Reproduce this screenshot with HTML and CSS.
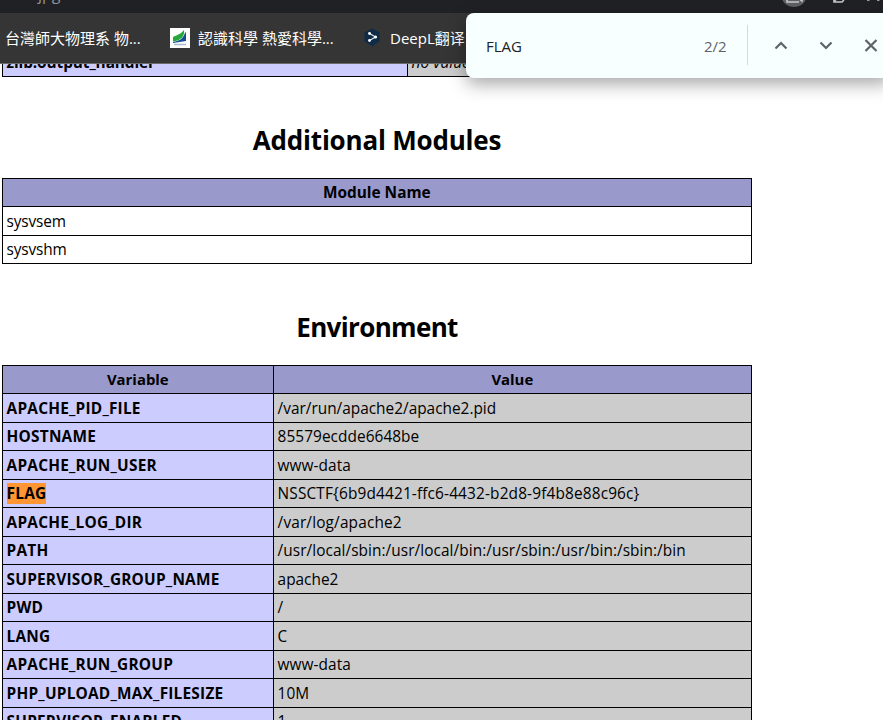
FILE: index.html
```
<!DOCTYPE html>
<html lang="en">
<head>
<meta charset="utf-8">
<title>phpinfo()</title>
<link rel="stylesheet" href="styles.css">
</head>
<body>
<div class="window">
  <div class="toolbar">
    <span class="address">jpg</span>
    <svg class="toolbar-icons" width="108" height="13" viewBox="0 0 108 13">
      <circle cx="19" cy="-6" r="13" fill="#5f6064"/>
      <path d="M12 -2V2H24M23 -2L27 1V-2" fill="none" stroke="#c8c9cb" stroke-width="1.6"/>
      <path d="M59 -3V2H67L68.500 .5V-3M59 1l4-3" fill="none" stroke="#c8c9cb" stroke-width="1.600"/>
      <path d="M92 .4h2.500M102 .4h2.500" stroke="#9a9b9e" stroke-width="1.300"/>
    </svg>
  </div>
  <div class="bookmarks">
    <span class="bookmark b1">台灣師大物理系 物...</span>
    <svg class="fav1" width="20" height="20" viewBox="0 0 20 20">
      <rect width="20" height="20" fill="#fff"/>
      <path d="M3 14C9 13 13 11 15 5L16 4V13L3 15Z" fill="#154e96"/>
      <path d="M3 13.500V9C7 7 11 6 14 2C15 8 11 12.500 3 13.500Z" fill="#27a83b"/>
      <path d="M4 16.500H16" stroke="#a9bccb" stroke-width="1.500"/>
    </svg>
    <span class="bookmark b2">認識科學 熱愛科學...</span>
    <svg class="fav2" width="16" height="20" viewBox="0 0 16 20">
      <path d="M8 .5L15.500 4.500V13.500L9.500 17V19L7 17.500L.5 13.500V4.500Z" fill="#0f2b46"/>
      <path d="M5.500 5.500L11.500 9L5.500 12.500" fill="none" stroke="#dfe5ea" stroke-width="1.200"/>
      <circle cx="5.500" cy="5.500" r="1.400" fill="#fff"/><circle cx="11.500" cy="9" r="1.600" fill="#fff"/><circle cx="5.500" cy="12.500" r="1.400" fill="#fff"/>
    </svg>
    <span class="bookmark b3">DeepL翻译</span>
  </div>

  <div class="page">
    <div class="table zlib">
      <div class="row"><div class="key">zlib.output_handler</div><div class="val"><i>no value</i></div></div>
    </div>
    <h2 class="h-modules">Additional Modules</h2>
    <div class="table modules">
      <div class="row head"><div class="cell">Module Name</div></div>
      <div class="row"><div class="cell">sysvsem</div></div>
      <div class="row"><div class="cell">sysvshm</div></div>
    </div>
    <h2 class="h-env">Environment</h2>
    <div class="table env">
      <div class="row head"><div class="key">Variable</div><div class="val">Value</div></div>
      <div class="row"><div class="key">APACHE_PID_FILE</div><div class="val tight">/var/run/apache2/apache2.pid</div></div>
      <div class="row"><div class="key">HOSTNAME</div><div class="val">85579ecdde6648be</div></div>
      <div class="row"><div class="key">APACHE_RUN_USER</div><div class="val">www-data</div></div>
      <div class="row"><div class="key"><mark>FLAG</mark></div><div class="val wide">NSSCTF{6b9d4421-ffc6-4432-b2d8-9f4b8e88c96c}</div></div>
      <div class="row"><div class="key">APACHE_LOG_DIR</div><div class="val wide">/var/log/apache2</div></div>
      <div class="row"><div class="key">PATH</div><div class="val">/usr/local/sbin:/usr/local/bin:/usr/sbin:/usr/bin:/sbin:/bin</div></div>
      <div class="row"><div class="key">SUPERVISOR_GROUP_NAME</div><div class="val tight">apache2</div></div>
      <div class="row"><div class="key">PWD</div><div class="val">/</div></div>
      <div class="row"><div class="key">LANG</div><div class="val">C</div></div>
      <div class="row"><div class="key">APACHE_RUN_GROUP</div><div class="val">www-data</div></div>
      <div class="row"><div class="key">PHP_UPLOAD_MAX_FILESIZE</div><div class="val">10M</div></div>
      <div class="row"><div class="key">SUPERVISOR_ENABLED</div><div class="val">1</div></div>
    </div>
  </div>

  <div class="findbar">
    <span class="query">FLAG</span>
    <span class="count">2/2</span>
    <span class="divider"></span>
    <svg class="find-icons" width="115" height="20" viewBox="0 0 115 20" fill="none" stroke="#5f6368" stroke-width="2.200">
      <path d="M7.500 12.500L13 7L18.500 12.500"/>
      <path d="M52.500 6.500L58 12L63.500 6.500"/>
      <path d="M97.500 4L108.500 15M108.500 4L97.500 15"/>
    </svg>
  </div>
</div>
</body>
</html>
```
FILE: styles.css
```
* { box-sizing: border-box; }
body {
  margin: 0;
  background: #fff;
  color: #000;
  font-family: "Open Sans", "Noto Sans CJK TC", sans-serif;
  font-size: 15px;
}
.window {
  position: relative;
  width: 883px;
  height: 720px;
  overflow: hidden;
}
.toolbar {
  display: flex;
  justify-content: space-between;
  height: 13px;
  padding-left: 38px;
  overflow: hidden;
  background: #202124;
}
.address {
  color: #8f9194;
  font-size: 16px;
  line-height: 20px;
  margin-top: -16px;
}
.bookmarks {
  display: flex;
  align-items: center;
  height: 51px;
  padding-left: 5px;
  background: #353535;
  border-bottom: 1px solid #6a6a6a;
  color: #fff;
  white-space: nowrap;
}
.bookmark { line-height: 20px; }
.b1 { width: 165px; }
.fav1 { margin-right: 8px; }
.b2 { width: 166px; }
.fav2 { margin-right: 10px; }
.b3 { font-family: "Open Sans", "Noto Sans CJK SC", sans-serif; }

.page { width: 750px; margin-left: 2px; }
.table {
  border: 1px solid #000;
  border-bottom: 0;
  font-size: 15.4px;
  letter-spacing: .06px;
  line-height: 20px;
  white-space: nowrap;
}
.row {
  display: flex;
  height: 29px;
  border-bottom: 1px solid #000;
}
.row > div { padding: 5px 4px 0 3.6px; }
.row:nth-child(odd) { height: 28px; }
.row:nth-child(odd) > div { padding-top: 4px; }
.key {
  width: 271px;
  border-right: 1px solid #000;
  background: #ccccff;
  letter-spacing: .22px;
  font-weight: 700;
}
.val { flex: 1; background: #ccc; }
.row .tight { letter-spacing: 0; }
.row .wide { letter-spacing: .15px; }
.modules .cell { letter-spacing: -.15px; }
.head { font-weight: 700; text-align: center; }
.head > div { flex-grow: 1; background: #9999cc; }
.row.head:nth-child(odd) > .key,
.row.head:nth-child(odd) > .val { padding-top: 3px; font-size: 14.9px; letter-spacing: 0; }
.modules .head .cell { letter-spacing: 0; }
.head .key { flex-grow: 0; }
.zlib { height: 13px; border-top: 0; overflow: hidden; }
.zlib .row { margin-top: -15px; }
.zlib .key { width: 405px; letter-spacing: -.1px; }
h2 {
  margin: 0;
  height: 101px;
  padding-top: 45px;
  font-size: 26px;
  line-height: 36px;
  text-align: center;
}
.h-modules { letter-spacing: -.2px; }
.h-env { letter-spacing: -.65px; }
mark { background: #ff9632; color: #000; }

.findbar {
  position: absolute;
  left: 466px;
  top: 13px;
  width: 425px;
  height: 65px;
  display: flex;
  align-items: center;
  padding-left: 20px;
  border-radius: 8px;
  background: #f8ffff;
  box-shadow: 0 6px 18px rgba(0, 0, 0, .35);
  color: #202124;
}
.query { width: 218px; }
.count { width: 43px; color: #5f6368; }
.divider { width: 1px; height: 40px; margin-top: -1px; background: #a8ebf5; }
.find-icons { margin-left: 20px; }
```
